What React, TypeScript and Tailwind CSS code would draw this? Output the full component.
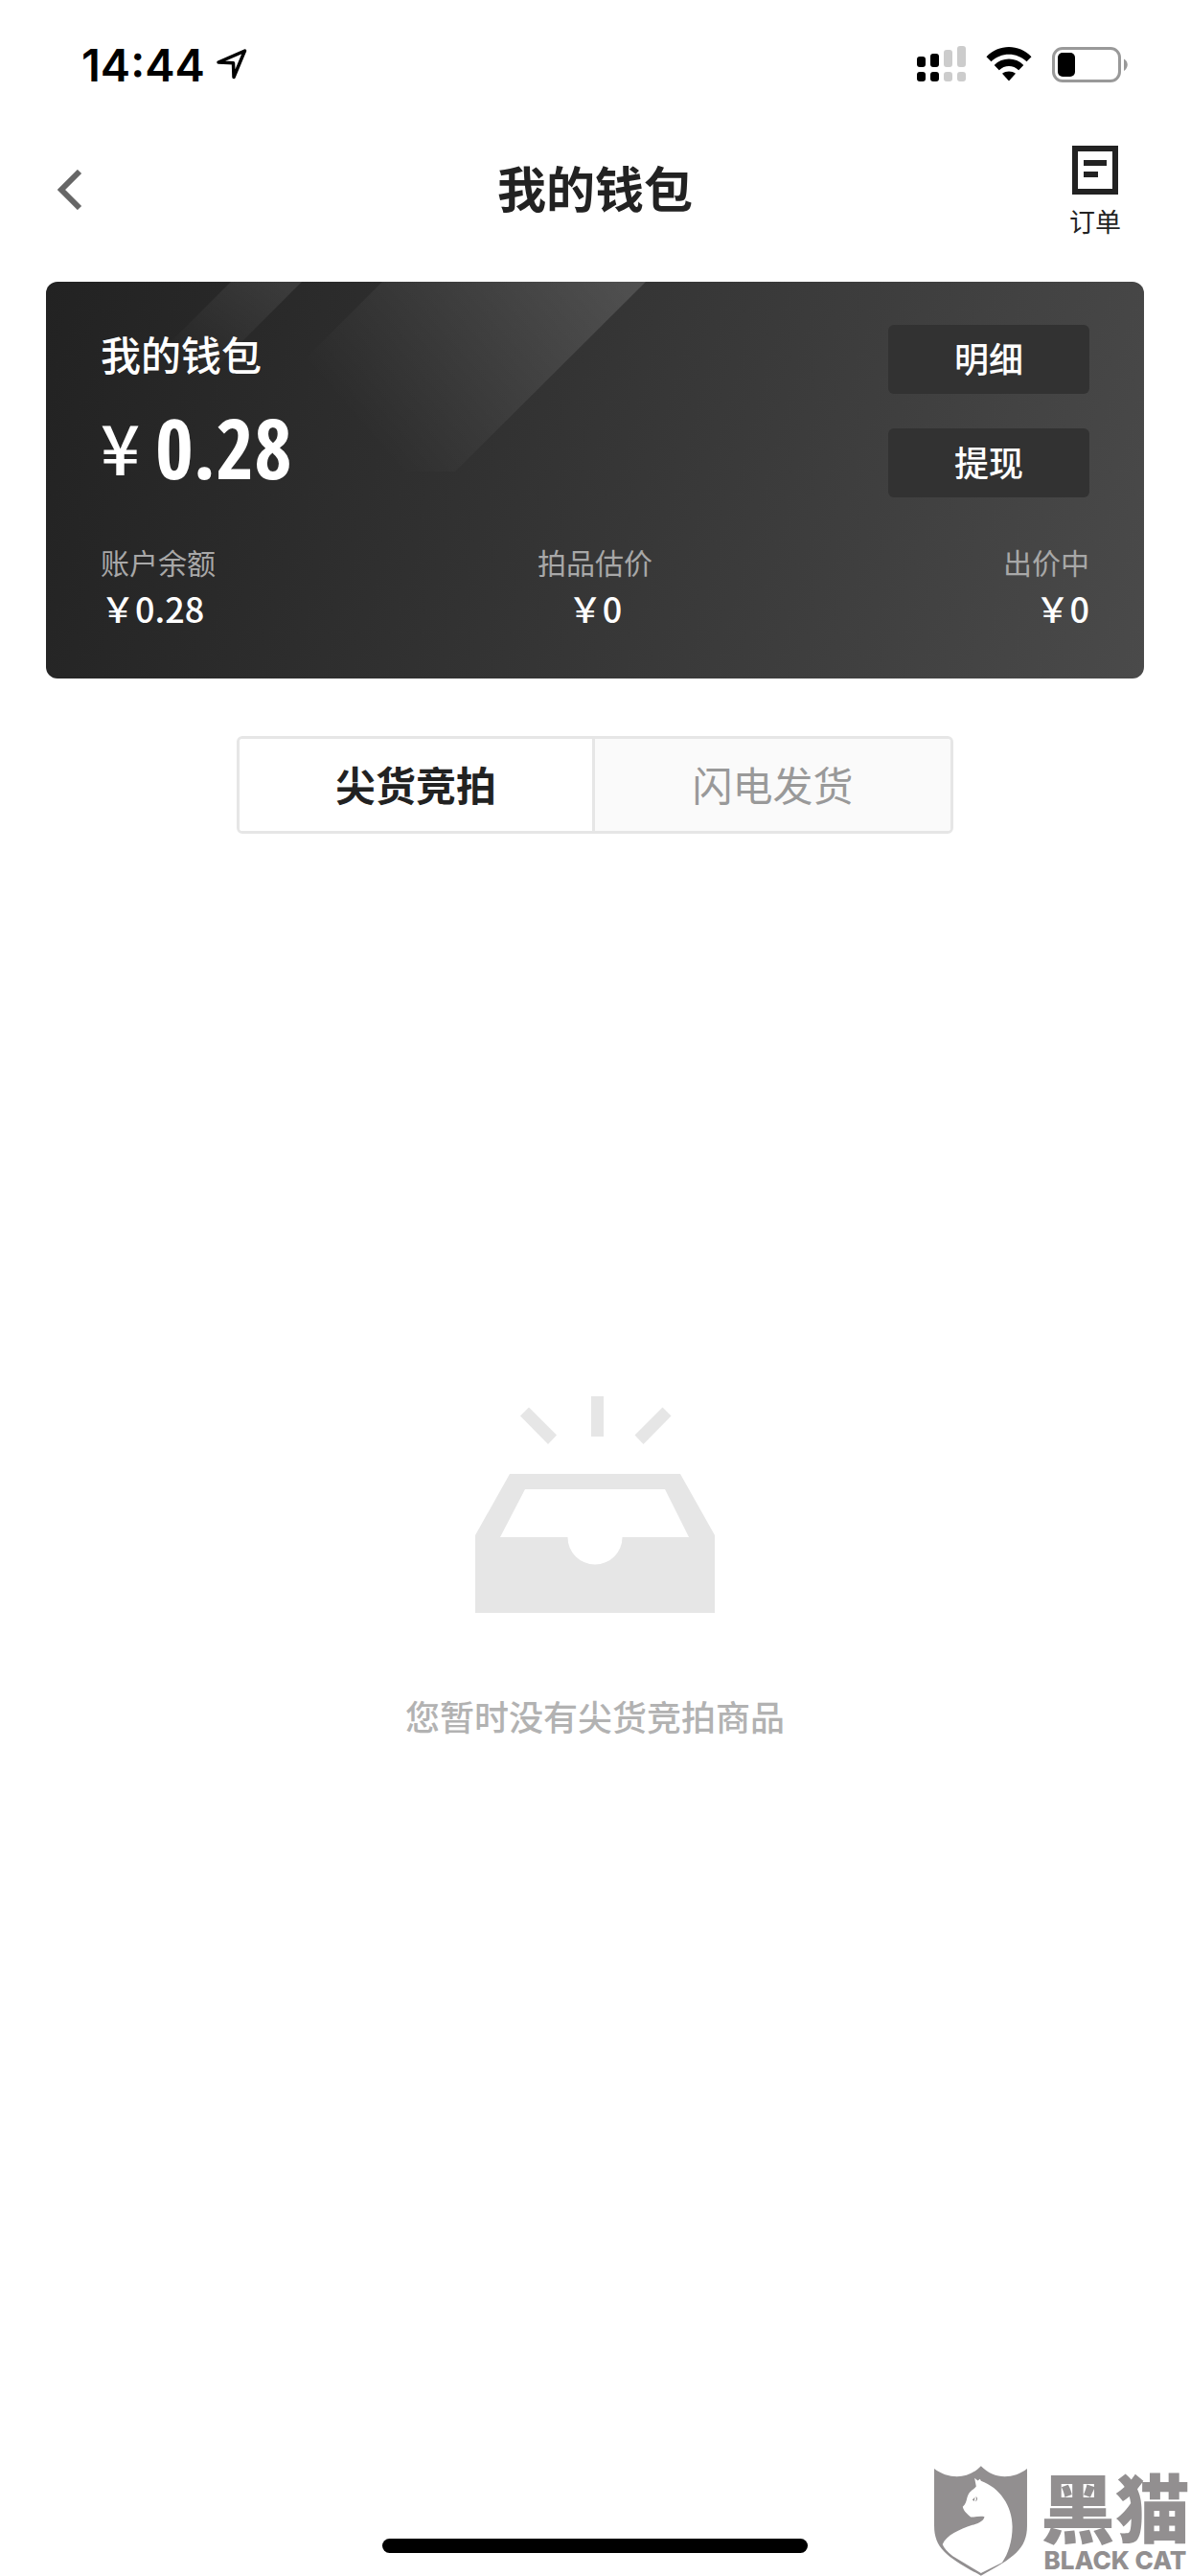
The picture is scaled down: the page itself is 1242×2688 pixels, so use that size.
import { useState } from "react";
import clsx from "clsx";

interface Stat {
  label: string;
  value: string;
  align: string;
}

const STATS: Stat[] = [
  { label: "账户余额", value: "0.28", align: "text-left" },
  { label: "拍品估价", value: "0", align: "text-center" },
  { label: "出价中", value: "0", align: "text-right" },
];

const TABS = ["尖货竞拍", "闪电发货"];

function SignalIcon() {
  return (
    <svg width="51" height="38" viewBox="0 0 51 38" aria-hidden="true">
      <g fill="#000">
        <rect x="0" y="11" width="9" height="11" rx="3" />
        <rect x="14" y="8" width="9" height="14" rx="3" />
        <rect x="0" y="27" width="9" height="10" rx="3" />
        <rect x="14" y="27" width="9" height="10" rx="3" />
      </g>
      <g fill="#ccc">
        <rect x="28" y="4" width="9" height="18" rx="3" />
        <rect x="42" y="0" width="9" height="22" rx="3" />
        <rect x="28" y="27" width="9" height="10" rx="3" />
        <rect x="42" y="27" width="9" height="10" rx="3" />
      </g>
    </svg>
  );
}

function WifiIcon() {
  return (
    <svg width="48" height="36" viewBox="0 0 48 36" aria-hidden="true">
      <path d="M0.5 10.2C13.5 -3.3 34.5 -3.3 47.5 10.2L42.5 15.3C32.3 5.1 15.7 5.1 5.5 15.3Z" />
      <path d="M8.7 18.9C17.2 10.4 30.8 10.4 39.3 18.9L34.2 24.2C28.6 18.5 19.4 18.5 13.8 24.2Z" />
      <path d="M17 27.8C21 24.6 27 24.6 31 27.8L24 35.5Z" />
    </svg>
  );
}

function BatteryIcon() {
  return (
    <svg width="79" height="37" viewBox="0 0 79 37" aria-hidden="true">
      <rect x="1.5" y="1.5" width="69" height="34" rx="9.5" fill="none" stroke="#999" strokeWidth="3" />
      <rect x="6" y="6" width="18" height="25" rx="5" />
      <path d="M75 12.5C80 15 80 22 75 25Z" fill="#999" />
    </svg>
  );
}

function StatusBar() {
  return (
    <div className="flex h-[132px] items-center justify-between pl-[85px] pr-[65px] pt-[2px]">
      <div className="flex items-center gap-3">
        <span className="font-[Inter] text-[47px] font-semibold leading-none text-black">14:44</span>
        <svg width="32" height="32" viewBox="0 0 32 32" fill="none" aria-hidden="true">
          <path
            d="M2 14L29.5 2L18 29.5L17.5 14.8Z"
            stroke="#000"
            strokeWidth="3.5"
            strokeLinejoin="round"
          />
        </svg>
      </div>
      <div className="flex items-center gap-[21px]">
        <SignalIcon />
        <WifiIcon />
        <BatteryIcon />
      </div>
    </div>
  );
}

function NavBar() {
  return (
    <header className="grid h-[132px] grid-cols-[1fr_auto_1fr] items-center px-[60px]">
      <button type="button" aria-label="返回" className="justify-self-start">
        <svg width="26" height="42" viewBox="0 0 26 42" fill="none">
          <path d="M23 2L4 21L23 40" stroke="#666" strokeWidth="6" />
        </svg>
      </button>
      <h1 className="pb-1.5 text-[51px] font-bold leading-[72px]">我的钱包</h1>
      <button type="button" className="flex flex-col items-center gap-2.5 justify-self-end px-3 pt-1">
        <svg width="48" height="51" viewBox="0 0 48 51" fill="#222" aria-hidden="true">
          <path d="M0 0H48V51H0ZM6 6V45H42V6Z" fillRule="evenodd" />
          <rect x="12" y="15" width="24" height="6" />
          <rect x="12" y="27" width="15" height="6" />
        </svg>
        <span className="text-[27px] leading-9">订单</span>
      </button>
    </header>
  );
}

function CardShine() {
  return (
    <svg className="absolute left-0 top-0" width="640" height="200" viewBox="0 0 640 200" aria-hidden="true">
      <defs>
        <linearGradient id="shine-lg" gradientUnits="userSpaceOnUse" x1="600" y1="0" x2="370" y2="200">
          <stop offset="0" stopColor="#fff" stopOpacity="0.13" />
          <stop offset="1" stopColor="#fff" stopOpacity="0" />
        </linearGradient>
        <linearGradient id="shine-sm" gradientUnits="userSpaceOnUse" x1="240" y1="0" x2="170" y2="105">
          <stop offset="0" stopColor="#fff" stopOpacity="0.08" />
          <stop offset="1" stopColor="#fff" stopOpacity="0" />
        </linearGradient>
      </defs>
      <path d="M193 0H267L162 105H88Z" fill="url(#shine-sm)" />
      <path d="M351 0H626L427 198H153Z" fill="url(#shine-lg)" />
    </svg>
  );
}

function WalletCard() {
  return (
    <section className="relative mx-12 mt-[30px] overflow-hidden rounded-xl bg-linear-105 from-[#222] to-[#4a4a4a] px-[57px] pb-[50px] pt-[45px] text-white">
      <CardShine />
      <div className="relative flex justify-between">
        <div>
          <h2 className="text-[42px] font-medium leading-[60px]">我的钱包</h2>
          <p className="flex h-[120px] items-center gap-4 pt-5 leading-[92px]">
            <span className="pb-2 text-[72px] font-medium">¥</span>
            <span className="pb-1 font-['Noto_Sans_ExtraCondensed','Open_Sans_Condensed','Roboto_Condensed',sans-serif] text-[86px] font-bold">
              0.28
            </span>
          </p>
        </div>
        <div className="flex flex-col gap-9">
          <button type="button" className="h-[72px] w-[210px] rounded-md bg-[#323232] pb-1 text-[36px] font-medium">
            明细
          </button>
          <button type="button" className="h-[72px] w-[210px] rounded-md bg-[#323232] pb-1 text-[36px] font-medium">
            提现
          </button>
        </div>
      </div>
      <dl className="relative mt-[43px] grid grid-cols-3">
        {STATS.map((s) => (
          <div key={s.label} className={s.align}>
            <dt className="text-[30px] leading-[48px] text-[#a8a8a8]">{s.label}</dt>
            <dd className="text-[36px] font-medium leading-[48px]">{"\uFFE5"}{s.value}</dd>
          </div>
        ))}
      </dl>
    </section>
  );
}

function EmptyState({ name }: { name: string }) {
  return (
    <div className="flex flex-1 flex-col items-center pt-[587px]">
      <svg width="250" height="226" viewBox="0 0 250 226" fill="#e6e6e6" aria-hidden="true">
        <rect x="121" y="0" width="13" height="42" />
        <path d="M56 11.5L85 40.5L76 50L47 20.5Z" />
        <path d="M195.5 11.5L204.5 20.5L175.5 50L166.5 40.5Z" />
        <path
          fillRule="evenodd"
          d="M36 81H214L250 145V226H0V145ZM52 97L26 147H96.5A28.5 28.5 0 0 0 153.5 147H223L198 97Z"
        />
      </svg>
      <p className="mt-[83px] text-[36px] font-medium leading-[48px] text-[#b2b2b2]">您暂时没有{name}商品</p>
    </div>
  );
}

function BlackCatMark() {
  return (
    <div className="absolute bottom-0 right-0 flex items-end gap-[14px] text-[#928f90]">
      <svg width="97" height="115" viewBox="94 75 290 344" aria-hidden="true">
        <path
          fill="#928f90"
          d="M94 84C140 118 200 118 240 76C280 118 340 118 384 84V262C384 335 342 362 240 418C138 362 94 335 94 262Z"
        />
        <path
          fill="#fff"
          d="M220 113L230 121L237 116L240 122C298 143 338 200 338 265C338 310 325 350 306 377L240 410L152 357Q126 336 120 320C132 292 172 274 213 260C236 254 248 246 251 234C235 231 222 236 208 235C200 228 186 218 183 203C192 196 194 187 197 174C203 152 218 150 225 139Z"
        />
        <path fill="#928f90" d="M213 181L221 173L219 186ZM224 171C231 175 230 184 222 187C226 181 226 177 224 171Z" />
      </svg>
      <div className="flex w-[156px] flex-col items-center">
        <span className="text-[78px] font-black leading-[84px]">黑猫</span>
        <span className="whitespace-nowrap font-[Inter] text-[26px] font-extrabold leading-8">BLACK CAT</span>
      </div>
    </div>
  );
}

export default function App() {
  const [tab, setTab] = useState(0);

  return (
    <main className="relative flex min-h-screen flex-col bg-white font-['Noto_Sans_CJK_SC',sans-serif] text-[#222]">
      <StatusBar />
      <NavBar />
      <WalletCard />

      <div role="tablist" className="mx-auto mt-[60px] flex divide-x-3 divide-[#e6e6e6] overflow-hidden rounded-md border-3 border-[#e6e6e6]">
        {TABS.map((name, i) => (
          <button
            key={name}
            type="button"
            role="tab"
            aria-selected={tab === i}
            onClick={() => setTab(i)}
            className={clsx(
              "h-24 w-[371px] pb-1 text-[42px]",
              tab === i ? "bg-white font-bold" : "bg-[#fafafa] text-[#999]"
            )}
          >
            {name}
          </button>
        ))}
      </div>

      <EmptyState name={TABS[tab]} />

      <div className="mx-auto mb-6 h-[15px] w-[444px] rounded-full bg-black" />
      <BlackCatMark />
    </main>
  );
}
